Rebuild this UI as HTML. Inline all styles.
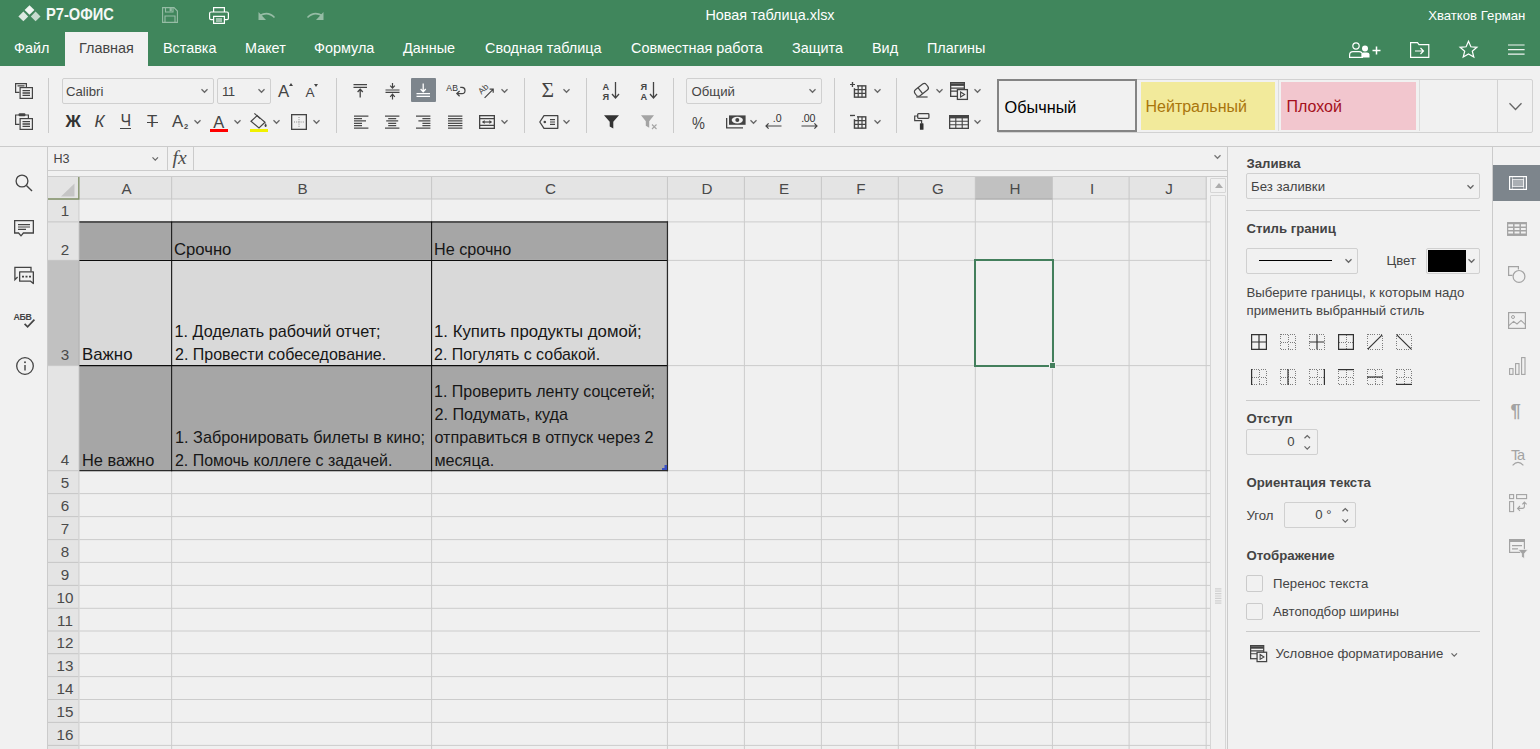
<!DOCTYPE html>
<html lang="ru"><head><meta charset="utf-8"><title>Новая таблица.xlsx</title>
<style>
*{box-sizing:border-box;margin:0;padding:0}
html,body{width:1540px;height:749px;overflow:hidden;background:#f1f1f1;}
body{position:relative;font-family:"Liberation Sans",Arial,Helvetica,sans-serif;font-size:13.2px;color:#444444;line-height:1;}
.a{position:absolute;white-space:nowrap}
svg{position:absolute;overflow:visible}
.tab{position:absolute;top:32px;height:34px;line-height:32px;font-size:14.4px;color:#fff;white-space:nowrap}
.sep{position:absolute;width:1px;background:#cbcbcb;top:78px;height:55px}
.combo{position:absolute;border:1px solid #d0d0d0;border-radius:2px;background:#f1f1f1}
.hl{position:absolute;height:1px;background:#cbcbcb}
.vl{position:absolute;width:1px;background:#cbcbcb}
.ch{position:absolute;top:177px;height:22px;background:#e4e4e4;border-right:1px solid #c3c3c3;border-bottom:1px solid #c3c3c3;text-align:center;font-size:16px;line-height:22px;color:#444}
.rh{position:absolute;left:48px;width:31px;background:#e4e4e4;border-right:1px solid #c3c3c3;border-bottom:1px solid #c3c3c3;text-align:center;font-size:16px;color:#444}
.rh span{position:absolute;left:0;right:0;bottom:1px;line-height:20px}
.ct{position:absolute;font-size:16.2px;line-height:23px;color:#161616;white-space:nowrap}
.lbl{position:absolute;white-space:nowrap;font-size:13.2px;line-height:16px;color:#444444}
.b{font-weight:700}
</style></head>
<body>
<div class="a" style="left:0;top:0;width:1540px;height:66px;background:#40865c"></div>
<svg style="left:18px;top:5px" width="23" height="17" viewBox="0 0 23 17" ><path d="M11.5 0.2 L16.4 5 L11.5 9.8 L6.6 5 Z" fill="#fff" opacity=".93"/><path d="M5.4 6.6 L10.2 11.4 L5.4 16.3 L0.4 11.4 Z" fill="#fff" opacity=".82"/><path d="M17.6 6.6 L22.5 11.4 L17.6 16.3 L12.8 11.4 Z" fill="#fff" opacity=".7"/></svg>
<div class="a b" style="left:45.6px;top:4.8px;font-size:17px;line-height:19px;color:#fff;transform:scaleX(0.862);transform-origin:0 0;opacity:.95">Р7-ОФИС</div>
<svg style="left:162px;top:7px" width="16" height="16" viewBox="0 0 16 16" ><g fill="none" stroke="#fff" stroke-width="1.1" opacity=".45"><path d="M0.6 0.6 H12 L15.4 4 V15.4 H0.6 Z"/><path d="M3.5 0.8 V5 H11 V0.8"/><path d="M3 15 V9 H13 V15"/></g><rect x="7.6" y="1.2" width="2.2" height="3" fill="#fff" opacity=".45"/></svg>
<svg style="left:209px;top:7px" width="20" height="17" viewBox="0 0 20 17" ><g fill="none" stroke="#fff" stroke-width="1.2"><path d="M4.6 5 V0.6 H15.4 V5"/><path d="M4.4 12.6 H2 Q0.6 12.6 0.6 11.2 V6.4 Q0.6 5 2 5 H18 Q19.4 5 19.4 6.4 V11.2 Q19.4 12.6 18 12.6 H15.6"/><path d="M4.6 9.4 H15.4 V16.4 H4.6 Z"/><path d="M7 12 H13 M7 14 H13"/></g></svg>
<svg style="left:258.3px;top:11px" width="18" height="11" viewBox="0 0 18 11" ><g opacity=".45"><path d="M2 4.5 Q10 0 16.5 6.5" fill="none" stroke="#fff" stroke-width="1.6"/><path d="M0.5 1 V9 H8 Z" fill="#fff"/></g></svg>
<svg style="left:306.3px;top:11px" width="18" height="11" viewBox="0 0 18 11" ><g opacity=".45"><path d="M16 4.5 Q8 0 1.5 6.5" fill="none" stroke="#fff" stroke-width="1.6"/><path d="M17.5 1 V9 H10 Z" fill="#fff"/></g></svg>
<div class="a" style="left:0;width:1540px;top:7px;text-align:center;font-size:14.4px;line-height:17px;color:#fff">Новая таблица.xlsx</div>
<div class="a" style="right:14.6px;top:8px;font-size:13.2px;line-height:16px;color:#fff">Хватков Герман</div>
<div class="a" style="left:65px;top:32px;width:83px;height:35px;background:#f1f1f1"></div>
<div class="tab" style="left:14px;color:#fff">Файл</div>
<div class="tab" style="left:79px;color:#444">Главная</div>
<div class="tab" style="left:163px;color:#fff">Вставка</div>
<div class="tab" style="left:245px;color:#fff">Макет</div>
<div class="tab" style="left:314px;color:#fff">Формула</div>
<div class="tab" style="left:403px;color:#fff">Данные</div>
<div class="tab" style="left:485px;color:#fff">Сводная таблица</div>
<div class="tab" style="left:631px;color:#fff">Совместная работа</div>
<div class="tab" style="left:792px;color:#fff">Защита</div>
<div class="tab" style="left:872px;color:#fff">Вид</div>
<div class="tab" style="left:927px;color:#fff">Плагины</div>
<svg style="left:1349px;top:42px" width="33" height="16" viewBox="0 0 33 16" ><g fill="none" stroke="#fff" stroke-width="1.2"><circle cx="7" cy="4" r="3.2"/><path d="M0.6 15.4 V13 Q0.6 9.6 4 9.6 H10 Q13.4 9.6 13.4 13 V15.4 Z"/></g><circle cx="16" cy="6.5" r="3" fill="#fff"/><path d="M12.5 15.6 V12.6 Q12.5 10.6 14.5 10.6 H18 Q20.5 10.6 20.5 12.6 V15.6 Z" fill="#fff"/><path d="M23.5 8.5 H31.5 M27.5 4.5 V12.5" stroke="#fff" stroke-width="1.5"/></svg>
<svg style="left:1410px;top:42px" width="19.4" height="16" viewBox="0 0 19.4 16" ><g fill="none" stroke="#fff" stroke-width="1.2"><path d="M0.6 15.4 V0.6 H7.5 L9 2.6 H18.8 V15.4 Z"/><path d="M5 9 H13.5 M10.5 6 L13.5 9 L10.5 12"/></g></svg>
<svg style="left:1459px;top:40px" width="19" height="18" viewBox="0 0 19 18" ><path d="M9.5 1.2 L11.9 6.8 L17.9 7.3 L13.3 11.2 L14.8 17.1 L9.5 13.9 L4.2 17.1 L5.7 11.2 L1.1 7.3 L7.1 6.8 Z" fill="none" stroke="#fff" stroke-width="1.2" stroke-linejoin="miter"/></svg>
<svg style="left:1507.6px;top:44.4px" width="17" height="11" viewBox="0 0 17 11" ><path d="M0 1 H16.6 M0 5.6 H16.6 M0 10.2 H16.6" stroke="#fff" stroke-width="1.2" opacity=".92"/></svg>
<div class="hl" style="left:0;top:146px;width:1540px"></div>
<div class="sep" style="left:48px"></div>
<div class="sep" style="left:336px"></div>
<div class="sep" style="left:524px"></div>
<div class="sep" style="left:586px"></div>
<div class="sep" style="left:673px"></div>
<div class="sep" style="left:834px"></div>
<div class="sep" style="left:896px"></div>
<svg style="left:15px;top:83px" width="18" height="16" viewBox="0 0 18 16" ><g fill="none" stroke="#444444" stroke-width="1.2"><path d="M11.4 4 V0.6 H0.6 V9.4 H4.5"/><rect x="5.1" y="4.6" width="12.3" height="10.8"/></g><path d="M2.5 2.8 H9.5 M7.5 7.6 H15 M7.5 10 H15 M7.5 12.4 H15" stroke="#444444" stroke-width="1.3"/></svg>
<svg style="left:15px;top:113px" width="18" height="17" viewBox="0 0 18 17" ><g fill="none" stroke="#444444" stroke-width="1.2"><path d="M4.5 11.4 H0.6 V2 H13.4 V5"/><rect x="5.1" y="5.6" width="12.3" height="10.8"/></g><rect x="3.6" y="0.2" width="6.8" height="3" rx="1" fill="#444444"/><path d="M7.5 8.6 H15 M7.5 11 H15 M7.5 13.4 H15" stroke="#444444" stroke-width="1.3"/></svg>
<div class="combo" style="left:62px;top:78px;width:152px;height:26px"></div>
<div class="lbl" style="left:66px;top:83.6px">Calibri</div>
<svg style="left:201.0px;top:89.1px" width="7" height="3.8" viewBox="0 0 7 3.8"><path d="M0.5 0.3 L3.5 3.3 L6.5 0.3" fill="none" stroke="#666" stroke-width="1.25"/></svg>
<div class="combo" style="left:217px;top:78px;width:54px;height:26px"></div>
<div class="lbl" style="left:222px;top:83.6px;letter-spacing:-0.6px">11</div>
<svg style="left:257.5px;top:89.1px" width="7" height="3.8" viewBox="0 0 7 3.8"><path d="M0.5 0.3 L3.5 3.3 L6.5 0.3" fill="none" stroke="#666" stroke-width="1.25"/></svg>
<div class="a" style="left:278px;top:81.5px;font-size:16.8px;line-height:20px;color:#444">A</div>
<svg style="left:288.5px;top:82.5px" width="4" height="3" viewBox="0 0 4 3" ><path d="M0 3 L2 0 L4 3 Z" fill="#444444"/></svg>
<div class="a" style="left:305.5px;top:84.4px;font-size:13.6px;line-height:17px;color:#444">A</div>
<svg style="left:314px;top:84.3px" width="4" height="3" viewBox="0 0 4 3" ><path d="M0 0 L2 3 L4 0 Z" fill="#444444"/></svg>
<div class="a b" style="left:65.5px;top:112px;font-size:17px;line-height:20px;color:#333">Ж</div>
<div class="a" style="left:94.5px;top:112px;font-size:17px;line-height:20px;font-style:italic;color:#444">К</div>
<div class="a" style="left:120.5px;top:111px;font-size:16px;line-height:20px;color:#444">Ч</div>
<div class="a" style="left:120px;top:128px;width:11px;height:1.3px;background:#444444"></div>
<div class="a" style="left:147px;top:112.2px;font-size:16.8px;line-height:20px;color:#444">Т</div>
<div class="a" style="left:146.5px;top:121.6px;width:11.5px;height:1.3px;background:#444444"></div>
<div class="a" style="left:172px;top:112.2px;font-size:16.8px;line-height:20px;color:#444">A</div>
<div class="a b" style="left:184px;top:122.5px;font-size:7.5px;line-height:8px;color:#444">2</div>
<svg style="left:194.0px;top:120.1px" width="7" height="3.8" viewBox="0 0 7 3.8"><path d="M0.5 0.3 L3.5 3.3 L6.5 0.3" fill="none" stroke="#666" stroke-width="1.25"/></svg>
<div class="a" style="left:213.3px;top:112.4px;font-size:16.5px;line-height:20px;color:#444">A</div>
<div class="a" style="left:210px;top:129px;width:17.5px;height:3.4px;background:#f00"></div>
<svg style="left:233.5px;top:120.1px" width="7" height="3.8" viewBox="0 0 7 3.8"><path d="M0.5 0.3 L3.5 3.3 L6.5 0.3" fill="none" stroke="#666" stroke-width="1.25"/></svg>
<svg style="left:250px;top:113px" width="17" height="16" viewBox="0 0 17 16" ><g fill="none" stroke="#444444" stroke-width="1.2"><path d="M7.2 2.6 L15 9.2 L9 15 L1 8.2 Z"/><path d="M4.4 0.4 L10.2 5.6"/></g><path d="M15.6 10.6 Q17.2 13.2 15.6 14 Q14 13.2 15.6 10.6 Z" fill="#444444" stroke="#444444" stroke-width="0.6"/></svg>
<div class="a" style="left:250px;top:129px;width:17.5px;height:3.4px;background:#f1f100"></div>
<svg style="left:273.0px;top:120.1px" width="7" height="3.8" viewBox="0 0 7 3.8"><path d="M0.5 0.3 L3.5 3.3 L6.5 0.3" fill="none" stroke="#666" stroke-width="1.25"/></svg>
<svg style="left:291px;top:114px" width="16" height="16" viewBox="0 0 16 16" ><rect x="0.65" y="0.65" width="14.7" height="14.7" fill="none" stroke="#444444" stroke-width="1.3"/><path d="M8 3 V13 M3 8 H13" stroke="#888" stroke-width="1" stroke-dasharray="1 1.2"/></svg>
<svg style="left:313.0px;top:120.1px" width="7" height="3.8" viewBox="0 0 7 3.8"><path d="M0.5 0.3 L3.5 3.3 L6.5 0.3" fill="none" stroke="#666" stroke-width="1.25"/></svg>
<svg style="left:353px;top:84px" width="15" height="14" viewBox="0 0 15 14" ><path d="M0.5 0.7 H14 M0.5 3.3 H14" stroke="#444444" stroke-width="1.3"/><path d="M7.2 13.5 V5.5 M4.6 8 L7.2 5.3 L9.8 8" fill="none" stroke="#444444" stroke-width="1.3"/></svg>
<svg style="left:384.5px;top:83px" width="15" height="16" viewBox="0 0 15 16" ><path d="M0.5 7 H14.5 M0.5 9.4 H14.5" stroke="#444444" stroke-width="1.2"/><path d="M7.5 0 V5 M5.2 2.6 L7.5 5.2 L9.8 2.6 M7.5 16.4 V11.4 M5.2 13.8 L7.5 11.2 L9.8 13.8" fill="none" stroke="#444444" stroke-width="1.2"/></svg>
<div class="a" style="left:411px;top:78px;width:25px;height:24px;background:#7d858c;border-radius:1px"></div>
<svg style="left:416px;top:83px" width="15" height="14" viewBox="0 0 15 14" ><path d="M0.5 10.7 H14 M0.5 13.3 H14" stroke="#fff" stroke-width="1.3"/><path d="M7.2 0.5 V8.5 M4.6 6 L7.2 8.7 L9.8 6" fill="none" stroke="#fff" stroke-width="1.3"/></svg>
<div class="a" style="left:446.3px;top:83.6px;font-size:8.6px;line-height:8px;color:#333;letter-spacing:0.3px">AB</div>
<svg style="left:446.5px;top:84px" width="19" height="15" viewBox="0 0 19 15" ><path d="M13.2 3.4 H15 Q18 3.6 18 6.4 Q18 9.6 15 9.6 H10 M12.6 7 L9.8 9.6 L12.6 12.2" fill="none" stroke="#444444" stroke-width="1.2"/></svg>
<svg style="left:479.5px;top:83px" width="16" height="16" viewBox="0 0 16 16" ><text x="1.6" y="11.8" font-size="8.6" fill="#444444" font-family="Liberation Sans, Arial, sans-serif" transform="rotate(-45 1.6 11.8)">Ab</text><path d="M4.6 14.8 L12.8 6.6 M9.6 6.2 L13.2 6.2 L13.2 9.8" fill="none" stroke="#444444" stroke-width="1.2"/></svg>
<svg style="left:501.0px;top:89.1px" width="7" height="3.8" viewBox="0 0 7 3.8"><path d="M0.5 0.3 L3.5 3.3 L6.5 0.3" fill="none" stroke="#666" stroke-width="1.25"/></svg>
<svg style="left:353.7px;top:115px" width="15" height="14" viewBox="0 0 15 14" ><path d="M0.0 1.1 H14.4 M0.0 3.5 H8.0 M0.0 5.9 H12.0 M0.0 8.4 H8.0 M0.0 10.7 H8.0 M0.0 13.1 H14.4" stroke="#4a4a4a" stroke-width="1.25"/></svg>
<svg style="left:385px;top:115px" width="15" height="14" viewBox="0 0 15 14" ><path d="M0.0 1.1 H14.4 M3.2 3.5 H11.2 M1.2 5.9 H13.2 M3.2 8.4 H11.2 M3.2 10.7 H11.2 M0.0 13.1 H14.4" stroke="#4a4a4a" stroke-width="1.25"/></svg>
<svg style="left:416.3px;top:115px" width="15" height="14" viewBox="0 0 15 14" ><path d="M0.0 1.1 H14.4 M6.4 3.5 H14.4 M2.4 5.9 H14.4 M6.4 8.4 H14.4 M6.4 10.7 H14.4 M0.0 13.1 H14.4" stroke="#4a4a4a" stroke-width="1.25"/></svg>
<svg style="left:447.5px;top:115px" width="15" height="14" viewBox="0 0 15 14" ><path d="M0.0 1.1 H14.4 M0.0 3.5 H14.4 M0.0 5.9 H14.4 M0.0 8.4 H14.4 M0.0 10.7 H14.4 M0.0 13.1 H14.4" stroke="#4a4a4a" stroke-width="1.25"/></svg>
<svg style="left:479px;top:115px" width="16" height="14" viewBox="0 0 16 14" ><rect x="0.65" y="0.65" width="14.7" height="12.7" fill="none" stroke="#444444" stroke-width="1.3"/><path d="M0.5 3.6 H15.5 M0.5 10.4 H15.5" stroke="#444444" stroke-width="1.1"/><path d="M3.5 7 H12.5" stroke="#444444" stroke-width="1.2"/><path d="M5.6 5 L3.2 7 L5.6 9 Z M10.4 5 L12.8 7 L10.4 9 Z" fill="#444444"/></svg>
<svg style="left:501.0px;top:120.1px" width="7" height="3.8" viewBox="0 0 7 3.8"><path d="M0.5 0.3 L3.5 3.3 L6.5 0.3" fill="none" stroke="#666" stroke-width="1.25"/></svg>
<div class="a" style="left:541.5px;top:79px;font-family:'Liberation Serif',serif;font-size:21.5px;line-height:22px;color:#444">Σ</div>
<svg style="left:563.0px;top:89.1px" width="7" height="3.8" viewBox="0 0 7 3.8"><path d="M0.5 0.3 L3.5 3.3 L6.5 0.3" fill="none" stroke="#666" stroke-width="1.25"/></svg>
<svg style="left:539px;top:115px" width="19.5" height="14" viewBox="0 0 19.5 14" ><path d="M5 0.65 H18.8 V13.35 H5 L0.8 7 Z" fill="none" stroke="#444444" stroke-width="1.3" stroke-linejoin="round"/><circle cx="5.8" cy="7" r="1.3" fill="#444444"/><path d="M11 4.6 H16 M11 7 H16 M11 9.4 H16" stroke="#444444" stroke-width="1.2"/></svg>
<svg style="left:563.0px;top:120.1px" width="7" height="3.8" viewBox="0 0 7 3.8"><path d="M0.5 0.3 L3.5 3.3 L6.5 0.3" fill="none" stroke="#666" stroke-width="1.25"/></svg>
<div class="a b" style="left:602.6px;top:81.6px;font-size:9.2px;line-height:10.4px;color:#444">A<br>Я</div>
<svg style="left:611px;top:82px" width="9" height="17" viewBox="0 0 9 17" ><path d="M4.5 0 V15.5 M1 12 L4.5 16 L8 12" fill="none" stroke="#444444" stroke-width="1.3"/></svg>
<div class="a b" style="left:640.6px;top:81.6px;font-size:9.2px;line-height:10.4px;color:#444">Я<br>A</div>
<svg style="left:649px;top:82px" width="9" height="17" viewBox="0 0 9 17" ><path d="M4.5 0 V15.5 M1 12 L4.5 16 L8 12" fill="none" stroke="#444444" stroke-width="1.3"/></svg>
<svg style="left:603.5px;top:115px" width="15" height="14" viewBox="0 0 15 14" ><path d="M0 0.3 H15 L9.3 6.8 V13.6 L5.7 11.5 V6.8 Z" fill="#333"/></svg>
<svg style="left:641px;top:115px" width="17" height="15" viewBox="0 0 17 15" ><g opacity=".4"><path d="M0 0.3 H13 L8.2 6.3 V12.8 L4.8 10.8 V6.3 Z" fill="#333"/><path d="M11 9.5 L15.5 14 M15.5 9.5 L11 14" stroke="#333" stroke-width="1.1"/></g></svg>
<div class="combo" style="left:686px;top:78px;width:136px;height:26px"></div>
<div class="lbl" style="left:691.5px;top:83.6px">Общий</div>
<svg style="left:808.5px;top:89.1px" width="7" height="3.8" viewBox="0 0 7 3.8"><path d="M0.5 0.3 L3.5 3.3 L6.5 0.3" fill="none" stroke="#666" stroke-width="1.25"/></svg>
<div class="a" style="left:691.5px;top:113.2px;font-size:16.5px;line-height:20px;color:#444;transform:scaleX(0.88);transform-origin:0 0">%</div>
<svg style="left:725.5px;top:115.3px" width="20" height="14" viewBox="0 0 20 14" ><rect x="3" y="0.4" width="16.6" height="9.4" fill="#444444"/><path d="M0.65 3 V12.9 H17" fill="none" stroke="#444444" stroke-width="1.3"/><ellipse cx="11.3" cy="5.1" rx="5.6" ry="3.3" fill="#f1f1f1"/><circle cx="11.3" cy="5.1" r="2" fill="#444444"/></svg>
<svg style="left:750.0px;top:120.1px" width="7" height="3.8" viewBox="0 0 7 3.8"><path d="M0.5 0.3 L3.5 3.3 L6.5 0.3" fill="none" stroke="#666" stroke-width="1.25"/></svg>
<div class="a" style="left:772.8px;top:112.8px;font-size:10.6px;line-height:10px;color:#333">.0</div>
<svg style="left:765px;top:123px" width="17" height="6" viewBox="0 0 17 6" ><path d="M16.5 3 H1 M3.6 0.4 L1 3 L3.6 5.6" fill="none" stroke="#444444" stroke-width="1.2"/></svg>
<div class="a" style="left:801.2px;top:112.8px;font-size:10.6px;line-height:10px;color:#333;letter-spacing:-0.3px">.00</div>
<svg style="left:801px;top:123px" width="17" height="6" viewBox="0 0 17 6" ><path d="M0.5 3 H16 M13.4 0.4 L16 3 L13.4 5.6" fill="none" stroke="#444444" stroke-width="1.2"/></svg>
<svg style="left:850px;top:82.2px" width="17" height="16" viewBox="0 0 17 16" ><path d="M0 2.5 H5 M2.5 0 V5" stroke="#444444" stroke-width="1.2"/><rect x="4.45" y="3.85" width="11.3" height="11.3" fill="none" stroke="#444444" stroke-width="1.4"/><path d="M4.5 7.6 H15.8 M4.5 11.4 H15.8 M8.2 3.8 V15.2 M12 3.8 V15.2" stroke="#444444" stroke-width="1.2"/><rect x="3" y="2.2" width="4" height="4" fill="#f1f1f1"/><path d="M0 2.5 H5 M2.5 0 V5" stroke="#444444" stroke-width="1.2"/></svg>
<svg style="left:873.5px;top:89.1px" width="7" height="3.8" viewBox="0 0 7 3.8"><path d="M0.5 0.3 L3.5 3.3 L6.5 0.3" fill="none" stroke="#666" stroke-width="1.25"/></svg>
<svg style="left:850px;top:113.4px" width="17" height="16" viewBox="0 0 17 16" ><path d="M0 2.5 H5" stroke="#444444" stroke-width="1.2"/><rect x="4.45" y="3.85" width="11.3" height="11.3" fill="none" stroke="#444444" stroke-width="1.4"/><path d="M4.5 7.6 H15.8 M4.5 11.4 H15.8 M8.2 3.8 V15.2 M12 3.8 V15.2" stroke="#444444" stroke-width="1.2"/><rect x="3" y="2.2" width="4" height="4" fill="#f1f1f1"/><path d="M0 2.5 H5" stroke="#444444" stroke-width="1.2"/></svg>
<svg style="left:873.5px;top:120.1px" width="7" height="3.8" viewBox="0 0 7 3.8"><path d="M0.5 0.3 L3.5 3.3 L6.5 0.3" fill="none" stroke="#666" stroke-width="1.25"/></svg>
<svg style="left:913px;top:83px" width="17" height="15" viewBox="0 0 17 15" ><g transform="rotate(-38 8.2 7)" fill="none" stroke="#444444" stroke-width="1.2"><rect x="1.2" y="3.2" width="14.4" height="7.6" rx="2.6"/><path d="M7 3.2 V10.8"/></g><path d="M3.2 14 H14.6" stroke="#444444" stroke-width="1.2"/></svg>
<svg style="left:936.0px;top:89.1px" width="7" height="3.8" viewBox="0 0 7 3.8"><path d="M0.5 0.3 L3.5 3.3 L6.5 0.3" fill="none" stroke="#666" stroke-width="1.25"/></svg>
<svg style="left:950px;top:82px" width="18" height="18" viewBox="0 0 18 18" ><rect x="0.65" y="0.65" width="13.7" height="13.7" fill="none" stroke="#444444" stroke-width="1.3"/><path d="M0.6 2.6 H14.4" stroke="#444444" stroke-width="2.6"/><path d="M0.5 6.2 H14.5 M0.5 9.2 H14.5" stroke="#444444" stroke-width="1.2"/><rect x="7.4" y="7.6" width="10" height="9.8" fill="#f1f1f1" stroke="#444444" stroke-width="1.3"/><path d="M10.6 10 L14.6 12.5 L10.6 15 Z" fill="none" stroke="#444444" stroke-width="1.1"/></svg>
<svg style="left:973.5px;top:89.1px" width="7" height="3.8" viewBox="0 0 7 3.8"><path d="M0.5 0.3 L3.5 3.3 L6.5 0.3" fill="none" stroke="#666" stroke-width="1.25"/></svg>
<svg style="left:914px;top:113px" width="16" height="17" viewBox="0 0 16 17" ><rect x="3.7" y="0.7" width="11.2" height="4.6" rx="0.8" fill="none" stroke="#444444" stroke-width="1.3"/><path d="M3.6 3 H0.7 V7.6 H7.6 V10.5" fill="none" stroke="#444444" stroke-width="1.2"/><rect x="5.9" y="10.2" width="3.6" height="6.6" rx="0.6" fill="#333"/></svg>
<svg style="left:949px;top:115px" width="20" height="14" viewBox="0 0 20 14" ><rect x="0.65" y="0.65" width="18.7" height="12.7" fill="none" stroke="#444444" stroke-width="1.3"/><path d="M0.6 2.2 H19.4" stroke="#444444" stroke-width="2.4"/><path d="M0.5 6.2 H19.5 M0.5 9.8 H19.5 M6.8 1 V13.4 M13.2 1 V13.4" stroke="#444444" stroke-width="1.1"/></svg>
<svg style="left:973.5px;top:120.1px" width="7" height="3.8" viewBox="0 0 7 3.8"><path d="M0.5 0.3 L3.5 3.3 L6.5 0.3" fill="none" stroke="#666" stroke-width="1.25"/></svg>
<div class="a" style="left:997px;top:79px;width:536px;height:54px;border:1px solid #d2d2d2;border-radius:2px"></div>
<div class="a" style="left:997px;top:79px;width:140px;height:53px;border:2px solid #848484;background:#f1f1f1"></div>
<div class="a" style="left:1141px;top:82px;width:134px;height:48px;background:#f2ea9b"></div>
<div class="a" style="left:1281px;top:82px;width:135px;height:48px;background:#f2c6ce"></div>
<div class="vl" style="left:1278px;top:80px;height:51px;background:#dcdcdc"></div>
<div class="vl" style="left:1419px;top:80px;height:51px;background:#dcdcdc"></div>
<div class="vl" style="left:1497px;top:80px;height:52px;background:#d2d2d2"></div>
<div class="a" style="left:1004.5px;top:97.5px;font-size:16.3px;line-height:18px;color:#000">Обычный</div>
<div class="a" style="left:1145.5px;top:97.5px;font-size:16px;line-height:18px;color:#a9750c">Нейтральный</div>
<div class="a" style="left:1286.5px;top:97.5px;font-size:16px;line-height:18px;color:#a5101c">Плохой</div>
<svg style="left:1508.5px;top:102.5px" width="13" height="7" viewBox="0 0 13 7"><path d="M0.5 0.3 L6.5 6.5 L12.5 0.3" fill="none" stroke="#666" stroke-width="1.3"/></svg>
<div class="vl" style="left:47px;top:147px;height:602px"></div>
<svg style="left:15px;top:174px" width="18" height="18" viewBox="0 0 18 18" ><circle cx="7" cy="7" r="5.9" fill="none" stroke="#444444" stroke-width="1.3"/><path d="M11.4 11.4 L17 17" stroke="#444444" stroke-width="1.4"/></svg>
<svg style="left:14px;top:220px" width="20" height="17" viewBox="0 0 20 17" ><path d="M0.65 0.65 H19.35 V13 H9.4 L7 15.8 L4.6 13 H0.65 Z" fill="none" stroke="#444444" stroke-width="1.3"/><path d="M4 4.6 H16 M4 7 H16 M4 9.4 H12" stroke="#444444" stroke-width="1.1"/></svg>
<svg style="left:14px;top:266px" width="20" height="18" viewBox="0 0 20 18" ><path d="M17 5.4 V1.4 H0.9 V13.6 L3.6 11" fill="none" stroke="#444444" stroke-width="1.3"/><path d="M5.65 5.85 H19.35 V17.6 L16.6 15.2 H5.65 Z" fill="none" stroke="#444444" stroke-width="1.3" stroke-linejoin="round"/><path d="M8 10.6 H10 M11.5 10.6 H13.5 M15 10.6 H17" stroke="#444444" stroke-width="1.7"/></svg>
<div class="a b" style="left:13.6px;top:312px;font-size:8.8px;line-height:10px;color:#444;letter-spacing:-0.4px">АБВ</div>
<svg style="left:23.5px;top:318.5px" width="11" height="9" viewBox="0 0 11 9" ><path d="M0.6 4.8 L3.6 7.8 L10.4 0.6" fill="none" stroke="#444444" stroke-width="1.7"/></svg>
<svg style="left:15.6px;top:357.2px" width="18" height="18" viewBox="0 0 18 18" ><circle cx="9" cy="9" r="8.3" fill="none" stroke="#444444" stroke-width="1.3"/><path d="M9 8 V13.4" stroke="#444444" stroke-width="1.4"/><circle cx="9" cy="5.2" r="0.95" fill="#444444"/></svg>
<div class="hl" style="left:48px;top:170px;width:1180px"></div>
<div class="hl" style="left:48px;top:176px;width:1180px"></div>
<div class="vl" style="left:167px;top:147px;height:23px"></div>
<div class="vl" style="left:193px;top:147px;height:23px"></div>
<div class="vl" style="left:1227px;top:147px;height:602px"></div>
<div class="a" style="left:53.5px;top:152px;font-size:12.6px;line-height:14px;color:#444">H3</div>
<svg style="left:151.75px;top:156.7px" width="6.5" height="3.6" viewBox="0 0 6.5 3.6"><path d="M0.5 0.3 L3.25 3.1 L6.0 0.3" fill="none" stroke="#666" stroke-width="1.2"/></svg>
<div class="a" style="left:172.5px;top:147.6px;font-family:'Liberation Serif',serif;font-style:italic;font-size:19.5px;line-height:20px;color:#4c4c4c;letter-spacing:0.2px">fx</div>
<svg style="left:1213.8px;top:154.9px" width="7" height="3.8" viewBox="0 0 7 3.8"><path d="M0.5 0.3 L3.5 3.3 L6.5 0.3" fill="none" stroke="#777" stroke-width="1.3"/></svg>
<div class="a" style="left:79px;top:200px;width:1128px;height:549px;background:#f0f0f0"></div>
<div class="a" style="left:48px;top:177px;width:1159px;height:22px;background:#e4e4e4"></div>
<div class="a" style="left:48px;top:177px;width:30px;height:572px;background:#e4e4e4"></div>
<div class="a" style="left:975px;top:177px;width:77px;height:22px;background:#c1c1c1"></div>
<div class="a" style="left:48px;top:260px;width:30px;height:105px;background:#c1c1c1"></div>
<div class="a" style="left:79px;top:221px;width:588px;height:39px;background:#a6a6a6"></div>
<div class="a" style="left:79px;top:260px;width:588px;height:105px;background:#d9d9d9"></div>
<div class="a" style="left:79px;top:365px;width:588px;height:105px;background:#a6a6a6"></div>
<svg style="left:0;top:0" width="1540" height="749" viewBox="0 0 1540 749" fill="none" stroke-width="1"><path d="M78.9 177 V199.5" stroke="#c6c6c6"/><path d="M171.65 177 V199.5" stroke="#c6c6c6"/><path d="M171.65 199.5 V749" stroke="#cccccc"/><path d="M431.6 177 V199.5" stroke="#c6c6c6"/><path d="M431.6 199.5 V749" stroke="#cccccc"/><path d="M667.45 177 V199.5" stroke="#c6c6c6"/><path d="M667.45 199.5 V749" stroke="#cccccc"/><path d="M744.4 177 V199.5" stroke="#c6c6c6"/><path d="M744.4 199.5 V749" stroke="#cccccc"/><path d="M821.4 177 V199.5" stroke="#c6c6c6"/><path d="M821.4 199.5 V749" stroke="#cccccc"/><path d="M898.3 177 V199.5" stroke="#c6c6c6"/><path d="M898.3 199.5 V749" stroke="#cccccc"/><path d="M975.3 177 V199.5" stroke="#c6c6c6"/><path d="M975.3 199.5 V749" stroke="#cccccc"/><path d="M1052.45 177 V199.5" stroke="#c6c6c6"/><path d="M1052.45 199.5 V749" stroke="#cccccc"/><path d="M1129.1 177 V199.5" stroke="#c6c6c6"/><path d="M1129.1 199.5 V749" stroke="#cccccc"/><path d="M1206.2 177 V199.5" stroke="#c6c6c6"/><path d="M1206.2 199.5 V749" stroke="#cccccc"/><path d="M78.9 199.5 V749" stroke="#c6c6c6"/><path d="M78.9 260.4 V365.6" stroke="#a6a6a6"/><path d="M48 221.9 H78.4" stroke="#c6c6c6"/><path d="M79.4 221.9 H1210.5" stroke="#cccccc"/><path d="M48 260.4 H78.4" stroke="#c6c6c6"/><path d="M79.4 260.4 H1210.5" stroke="#cccccc"/><path d="M48 365.6 H78.4" stroke="#c6c6c6"/><path d="M79.4 365.6 H1210.5" stroke="#cccccc"/><path d="M48 470.7 H78.4" stroke="#c6c6c6"/><path d="M79.4 470.7 H1210.5" stroke="#cccccc"/><path d="M48 493.6 H78.4" stroke="#c6c6c6"/><path d="M79.4 493.6 H1210.5" stroke="#cccccc"/><path d="M48 516.6 H78.4" stroke="#c6c6c6"/><path d="M79.4 516.6 H1210.5" stroke="#cccccc"/><path d="M48 539.6 H78.4" stroke="#c6c6c6"/><path d="M79.4 539.6 H1210.5" stroke="#cccccc"/><path d="M48 562.4 H78.4" stroke="#c6c6c6"/><path d="M79.4 562.4 H1210.5" stroke="#cccccc"/><path d="M48 585.4 H78.4" stroke="#c6c6c6"/><path d="M79.4 585.4 H1210.5" stroke="#cccccc"/><path d="M48 608.3 H78.4" stroke="#c6c6c6"/><path d="M79.4 608.3 H1210.5" stroke="#cccccc"/><path d="M48 631.0 H78.4" stroke="#c6c6c6"/><path d="M79.4 631.0 H1210.5" stroke="#cccccc"/><path d="M48 653.7 H78.4" stroke="#c6c6c6"/><path d="M79.4 653.7 H1210.5" stroke="#cccccc"/><path d="M48 676.6 H78.4" stroke="#c6c6c6"/><path d="M79.4 676.6 H1210.5" stroke="#cccccc"/><path d="M48 699.5 H78.4" stroke="#c6c6c6"/><path d="M79.4 699.5 H1210.5" stroke="#cccccc"/><path d="M48 722.4 H78.4" stroke="#c6c6c6"/><path d="M79.4 722.4 H1210.5" stroke="#cccccc"/><path d="M48 745.4 H78.4" stroke="#c6c6c6"/><path d="M79.4 745.4 H1210.5" stroke="#cccccc"/><path d="M48 199.0 H1206.6" stroke="#c6c6c6"/><path d="M975.3 199.0 H1052.45" stroke="#a6a6a6"/></svg>
<div class="a" style="left:80.5px;top:179.6px;width:92px;text-align:center;font-size:15.2px;line-height:18px;color:#4a4a4a">A</div>
<div class="a" style="left:172.5px;top:179.6px;width:260px;text-align:center;font-size:15.2px;line-height:18px;color:#4a4a4a">B</div>
<div class="a" style="left:432.5px;top:179.6px;width:236px;text-align:center;font-size:15.2px;line-height:18px;color:#4a4a4a">C</div>
<div class="a" style="left:668.5px;top:179.6px;width:77px;text-align:center;font-size:15.2px;line-height:18px;color:#4a4a4a">D</div>
<div class="a" style="left:745.5px;top:179.6px;width:77px;text-align:center;font-size:15.2px;line-height:18px;color:#4a4a4a">E</div>
<div class="a" style="left:822.5px;top:179.6px;width:77px;text-align:center;font-size:15.2px;line-height:18px;color:#4a4a4a">F</div>
<div class="a" style="left:899.5px;top:179.6px;width:77px;text-align:center;font-size:15.2px;line-height:18px;color:#4a4a4a">G</div>
<div class="a" style="left:976.5px;top:179.6px;width:77px;text-align:center;font-size:15.2px;line-height:18px;color:#4a4a4a">H</div>
<div class="a" style="left:1053.5px;top:179.6px;width:77px;text-align:center;font-size:15.2px;line-height:18px;color:#4a4a4a">I</div>
<div class="a" style="left:1130.5px;top:179.6px;width:77px;text-align:center;font-size:15.2px;line-height:18px;color:#4a4a4a">J</div>
<div class="a" style="left:49.5px;top:202px;width:31px;text-align:center;font-size:15.2px;line-height:18px;color:#4a4a4a">1</div>
<div class="a" style="left:49.5px;top:241px;width:31px;text-align:center;font-size:15.2px;line-height:18px;color:#4a4a4a">2</div>
<div class="a" style="left:49.5px;top:346px;width:31px;text-align:center;font-size:15.2px;line-height:18px;color:#4a4a4a">3</div>
<div class="a" style="left:49.5px;top:451px;width:31px;text-align:center;font-size:15.2px;line-height:18px;color:#4a4a4a">4</div>
<div class="a" style="left:49.5px;top:474px;width:31px;text-align:center;font-size:15.2px;line-height:18px;color:#4a4a4a">5</div>
<div class="a" style="left:49.5px;top:497px;width:31px;text-align:center;font-size:15.2px;line-height:18px;color:#4a4a4a">6</div>
<div class="a" style="left:49.5px;top:520px;width:31px;text-align:center;font-size:15.2px;line-height:18px;color:#4a4a4a">7</div>
<div class="a" style="left:49.5px;top:543px;width:31px;text-align:center;font-size:15.2px;line-height:18px;color:#4a4a4a">8</div>
<div class="a" style="left:49.5px;top:566px;width:31px;text-align:center;font-size:15.2px;line-height:18px;color:#4a4a4a">9</div>
<div class="a" style="left:49.5px;top:589px;width:31px;text-align:center;font-size:15.2px;line-height:18px;color:#4a4a4a">10</div>
<div class="a" style="left:49.5px;top:612px;width:31px;text-align:center;font-size:15.2px;line-height:18px;color:#4a4a4a">11</div>
<div class="a" style="left:49.5px;top:634px;width:31px;text-align:center;font-size:15.2px;line-height:18px;color:#4a4a4a">12</div>
<div class="a" style="left:49.5px;top:657px;width:31px;text-align:center;font-size:15.2px;line-height:18px;color:#4a4a4a">13</div>
<div class="a" style="left:49.5px;top:680px;width:31px;text-align:center;font-size:15.2px;line-height:18px;color:#4a4a4a">14</div>
<div class="a" style="left:49.5px;top:703px;width:31px;text-align:center;font-size:15.2px;line-height:18px;color:#4a4a4a">15</div>
<div class="a" style="left:49.5px;top:726px;width:31px;text-align:center;font-size:15.2px;line-height:18px;color:#4a4a4a">16</div>
<svg style="left:60px;top:183px" width="15" height="14" viewBox="0 0 15 14" ><path d="M14.5 0.5 V13.5 H1 Z" fill="#c5c5c5"/></svg>
<svg style="left:0;top:0" width="100" height="210" viewBox="0 0 100 210" fill="none"><path d="M48 199 H78.8 V177" stroke="#83936a" stroke-width="1.3"/></svg>
<svg style="left:0;top:0" width="1540" height="749" viewBox="0 0 1540 749" fill="none"><path d="M79.4 222.1 H668" stroke="#333" stroke-width="1.5"/><path d="M79.4 260.4 H668" stroke="#0c0c0c" stroke-width="1.05"/><path d="M79.4 365.6 H668" stroke="#0c0c0c" stroke-width="1.05"/><path d="M79.4 470.59999999999997 H668" stroke="#2a2a2a" stroke-width="1.25"/><path d="M171.65 221.4 V471.2" stroke="#0c0c0c" stroke-width="1.05"/><path d="M431.6 221.4 V471.2" stroke="#0c0c0c" stroke-width="1.05"/><path d="M667.45 221.4 V471.2" stroke="#2a2a2a" stroke-width="1.25"/></svg>
<div class="ct" style="left:174px;top:238px"><span style="display:block;transform:scaleX(1.03);transform-origin:0 50%">Срочно</span></div>
<div class="ct" style="left:434px;top:238px"><span style="display:block">Не срочно</span></div>
<div class="ct" style="left:81.5px;top:343px"><span style="display:block;transform:scaleX(1.04);transform-origin:0 50%">Важно</span></div>
<div class="ct" style="left:174.6px;top:320px"><span style="display:block">1. Доделать рабочий отчет;</span><span style="display:block;transform:scaleX(0.989);transform-origin:0 50%">2. Провести собеседование.</span></div>
<div class="ct" style="left:434.4px;top:320px"><span style="display:block;transform:scaleX(1.036);transform-origin:0 50%">1. Купить продукты домой;</span><span style="display:block;transform:scaleX(0.987);transform-origin:0 50%">2. Погулять с собакой.</span></div>
<div class="ct" style="left:81.5px;top:448.7px"><span style="display:block;transform:scaleX(1.012);transform-origin:0 50%">Не важно</span></div>
<div class="ct" style="left:174.6px;top:425.7px"><span style="display:block;transform:scaleX(1.005);transform-origin:0 50%">1. Забронировать билеты в кино;</span><span style="display:block;transform:scaleX(0.985);transform-origin:0 50%">2. Помочь коллеге с задачей.</span></div>
<div class="ct" style="left:434.4px;top:379.7px"><span style="display:block;transform:scaleX(0.988);transform-origin:0 50%">1. Проверить ленту соцсетей;</span><span style="display:block">2. Подумать, куда</span><span style="display:block">отправиться в отпуск через 2</span><span style="display:block">месяца.</span></div>
<svg style="left:662.2px;top:465.4px" width="5" height="5" viewBox="0 0 5 5" ><path d="M5 0 V5 H0 V3 H2.5 V0 Z" fill="#3a50c4"/></svg>
<div class="a" style="left:974px;top:259px;width:80px;height:108px;border:2px solid #437f5c"></div>
<div class="a" style="left:1049px;top:362px;width:7px;height:7px;background:#437f5c;border:1px solid #f0f0f0"></div>
<div class="a" style="left:1210px;top:178px;width:16px;height:15px;border:1px solid #d6d6d6;background:#f1f1f1;border-radius:1px"></div>
<svg style="left:1214.5px;top:183px" width="8" height="5" viewBox="0 0 8 5" ><path d="M0 5 L4 0 L8 5 Z" fill="#adadad"/></svg>
<div class="a" style="left:1210px;top:195px;width:16px;height:560px;border:1px solid #d6d6d6;background:#f1f1f1;border-radius:1px"></div>
<svg style="left:1215px;top:587.5px" width="6.5" height="16" viewBox="0 0 6.5 16" ><path d="M0 0.8 H6.4 M0 3.2 H6.4 M0 5.6 H6.4 M0 8 H6.4 M0 10.4 H6.4 M0 12.8 H6.4 M0 15.2 H6.4" stroke="#d0d0d0" stroke-width="1.2"/></svg>
<div class="lbl b" style="left:1246.5px;top:156px;font-size:13.2px">Заливка</div>
<div class="combo" style="left:1246px;top:173px;width:234px;height:26px"></div>
<div class="lbl" style="left:1251px;top:178.5px;font-size:13.2px">Без заливки</div>
<svg style="left:1466.5px;top:185.1px" width="7" height="3.8" viewBox="0 0 7 3.8"><path d="M0.5 0.3 L3.5 3.3 L6.5 0.3" fill="none" stroke="#666" stroke-width="1.25"/></svg>
<div class="hl" style="left:1246px;top:210px;width:234px"></div>
<div class="lbl b" style="left:1246.5px;top:221px;font-size:13.2px">Стиль границ</div>
<div class="combo" style="left:1246px;top:248px;width:112px;height:26px"></div>
<div class="a" style="left:1259px;top:260px;width:73px;height:1.2px;background:#000"></div>
<svg style="left:1345.0px;top:259.1px" width="7" height="3.8" viewBox="0 0 7 3.8"><path d="M0.5 0.3 L3.5 3.3 L6.5 0.3" fill="none" stroke="#666" stroke-width="1.25"/></svg>
<div class="lbl" style="left:1386.5px;top:252.5px;font-size:13.2px">Цвет</div>
<div class="combo" style="left:1426px;top:248px;width:54px;height:26px"></div>
<div class="a" style="left:1428px;top:250px;width:37.5px;height:22px;background:#000"></div>
<svg style="left:1468.0px;top:259.1px" width="7" height="3.8" viewBox="0 0 7 3.8"><path d="M0.5 0.3 L3.5 3.3 L6.5 0.3" fill="none" stroke="#666" stroke-width="1.25"/></svg>
<div class="lbl" style="left:1246.5px;top:285px;font-size:13.2px">Выберите границы, к которым надо</div>
<div class="lbl" style="left:1246.5px;top:302.6px;font-size:13.2px">применить выбранный стиль</div>
<svg style="left:1251px;top:334px" width="16" height="16" viewBox="0 0 16 16" ><path d="M0.6 0.6 H15.4 V15.4 H0.6 Z M8 0.6 V15.4 M0.6 8 H15.4" stroke="#333" stroke-width="1.2" fill="none"/></svg>
<svg style="left:1280px;top:334px" width="16" height="16" viewBox="0 0 16 16" ><path d="M0.5 0.5 H15.5 V15.5 H0.5 Z M8 0.5 V15.5 M0.5 8 H15.5" stroke="#7c7c7c" stroke-width="1" stroke-dasharray="1 1.3" fill="none" shape-rendering="crispEdges"/></svg>
<svg style="left:1308.5px;top:334px" width="16" height="16" viewBox="0 0 16 16" ><path d="M0.5 0.5 H15.5 V15.5 H0.5 Z" stroke="#7c7c7c" stroke-width="1" stroke-dasharray="1 1.3" fill="none" shape-rendering="crispEdges"/><path d="M8 0.5 V15.5 M0.5 8 H15.5" stroke="#333" stroke-width="1.2" fill="none"/></svg>
<svg style="left:1337.5px;top:334px" width="16" height="16" viewBox="0 0 16 16" ><path d="M8 0.5 V15.5 M0.5 8 H15.5" stroke="#7c7c7c" stroke-width="1" stroke-dasharray="1 1.3" fill="none" shape-rendering="crispEdges"/><path d="M0.6 0.6 H15.4 V15.4 H0.6 Z" stroke="#333" stroke-width="1.2" fill="none"/></svg>
<svg style="left:1366.5px;top:334px" width="16" height="16" viewBox="0 0 16 16" ><path d="M0.5 0.5 H15.5 V15.5 H0.5 Z" stroke="#7c7c7c" stroke-width="1" stroke-dasharray="1 1.3" fill="none" shape-rendering="crispEdges"/><path d="M0.8 15.2 L15.2 0.8" stroke="#333" stroke-width="1.2" fill="none"/></svg>
<svg style="left:1395.5px;top:334px" width="16" height="16" viewBox="0 0 16 16" ><path d="M0.5 0.5 H15.5 V15.5 H0.5 Z" stroke="#7c7c7c" stroke-width="1" stroke-dasharray="1 1.3" fill="none" shape-rendering="crispEdges"/><path d="M0.8 0.8 L15.2 15.2" stroke="#333" stroke-width="1.2" fill="none"/></svg>
<svg style="left:1251px;top:369px" width="16" height="16" viewBox="0 0 16 16" ><path d="M0.5 0.5 H15.5 V15.5 H0.5 Z M8 0.5 V15.5 M0.5 8 H15.5" stroke="#7c7c7c" stroke-width="1" stroke-dasharray="1 1.3" fill="none" shape-rendering="crispEdges"/><path d="M0.6 0 V16" stroke="#333" stroke-width="1.2" fill="none"/></svg>
<svg style="left:1280px;top:369px" width="16" height="16" viewBox="0 0 16 16" ><path d="M0.5 0.5 H15.5 V15.5 H0.5 Z M8 0.5 V15.5 M0.5 8 H15.5" stroke="#7c7c7c" stroke-width="1" stroke-dasharray="1 1.3" fill="none" shape-rendering="crispEdges"/><path d="M8 0 V16" stroke="#333" stroke-width="1.2" fill="none"/></svg>
<svg style="left:1308.5px;top:369px" width="16" height="16" viewBox="0 0 16 16" ><path d="M0.5 0.5 H15.5 V15.5 H0.5 Z M8 0.5 V15.5 M0.5 8 H15.5" stroke="#7c7c7c" stroke-width="1" stroke-dasharray="1 1.3" fill="none" shape-rendering="crispEdges"/><path d="M15.4 0 V16" stroke="#333" stroke-width="1.2" fill="none"/></svg>
<svg style="left:1337.5px;top:369px" width="16" height="16" viewBox="0 0 16 16" ><path d="M0.5 0.5 H15.5 V15.5 H0.5 Z M8 0.5 V15.5 M0.5 8 H15.5" stroke="#7c7c7c" stroke-width="1" stroke-dasharray="1 1.3" fill="none" shape-rendering="crispEdges"/><path d="M0 0.6 H16" stroke="#333" stroke-width="1.2" fill="none"/></svg>
<svg style="left:1366.5px;top:369px" width="16" height="16" viewBox="0 0 16 16" ><path d="M0.5 0.5 H15.5 V15.5 H0.5 Z M8 0.5 V15.5 M0.5 8 H15.5" stroke="#7c7c7c" stroke-width="1" stroke-dasharray="1 1.3" fill="none" shape-rendering="crispEdges"/><path d="M0 8 H16" stroke="#333" stroke-width="1.2" fill="none"/></svg>
<svg style="left:1395.5px;top:369px" width="16" height="16" viewBox="0 0 16 16" ><path d="M0.5 0.5 H15.5 V15.5 H0.5 Z M8 0.5 V15.5 M0.5 8 H15.5" stroke="#7c7c7c" stroke-width="1" stroke-dasharray="1 1.3" fill="none" shape-rendering="crispEdges"/><path d="M0 15.4 H16" stroke="#333" stroke-width="1.2" fill="none"/></svg>
<div class="hl" style="left:1246px;top:400px;width:234px"></div>
<div class="lbl b" style="left:1246.5px;top:411px;font-size:13.2px">Отступ</div>
<div class="combo" style="left:1246px;top:429px;width:72px;height:26px"></div>
<div class="lbl" style="left:1246px;top:434.4px;width:48.5px;text-align:right">0</div>
<svg style="left:1304.45px;top:435.2px" width="6.5" height="3.6" viewBox="0 0 6.5 3.6"><path d="M0.5 3.3 L3.25 0.5 L6.0 3.3" fill="none" stroke="#666" stroke-width="1.2"/></svg>
<svg style="left:1304.45px;top:445.7px" width="6.5" height="3.6" viewBox="0 0 6.5 3.6"><path d="M0.5 0.3 L3.25 3.1 L6.0 0.3" fill="none" stroke="#666" stroke-width="1.2"/></svg>
<div class="lbl b" style="left:1246.5px;top:475px;font-size:13.2px">Ориентация текста</div>
<div class="lbl" style="left:1246.5px;top:507.5px;font-size:13.2px">Угол</div>
<div class="combo" style="left:1284px;top:502px;width:72px;height:26px"></div>
<div class="lbl" style="left:1284px;top:507.4px;width:47.5px;text-align:right">0 °</div>
<svg style="left:1342.45px;top:508.2px" width="6.5" height="3.6" viewBox="0 0 6.5 3.6"><path d="M0.5 3.3 L3.25 0.5 L6.0 3.3" fill="none" stroke="#666" stroke-width="1.2"/></svg>
<svg style="left:1342.45px;top:518.7px" width="6.5" height="3.6" viewBox="0 0 6.5 3.6"><path d="M0.5 0.3 L3.25 3.1 L6.0 0.3" fill="none" stroke="#666" stroke-width="1.2"/></svg>
<div class="lbl b" style="left:1246.5px;top:548px;font-size:13.2px">Отображение</div>
<div class="a" style="left:1246px;top:575px;width:17px;height:17px;border:1px solid #cbcbcb;border-radius:2px;background:#f1f1f1"></div>
<div class="lbl" style="left:1273px;top:575.6px;font-size:13.2px">Перенос текста</div>
<div class="a" style="left:1246px;top:603px;width:17px;height:17px;border:1px solid #cbcbcb;border-radius:2px;background:#f1f1f1"></div>
<div class="lbl" style="left:1273px;top:603.5px;font-size:13.2px">Автоподбор ширины</div>
<div class="hl" style="left:1246px;top:631px;width:234px"></div>
<svg style="left:1250px;top:645px" width="17.2" height="17.2" viewBox="0 0 18 18" ><rect x="0.65" y="0.65" width="13.7" height="13.7" fill="none" stroke="#444444" stroke-width="1.3"/><path d="M0.6 2.6 H14.4" stroke="#444444" stroke-width="2.6"/><path d="M0.5 6.2 H14.5 M0.5 9.2 H14.5" stroke="#444444" stroke-width="1.2"/><rect x="7.4" y="7.6" width="10" height="9.8" fill="#f1f1f1" stroke="#444444" stroke-width="1.3"/><path d="M10.6 10 L14.6 12.5 L10.6 15 Z" fill="none" stroke="#444444" stroke-width="1.1"/></svg>
<div class="lbl" style="left:1275.5px;top:646px;font-size:13.2px">Условное форматирование</div>
<svg style="left:1451.25px;top:652.7px" width="6.5" height="3.6" viewBox="0 0 6.5 3.6"><path d="M0.5 0.3 L3.25 3.1 L6.0 0.3" fill="none" stroke="#666" stroke-width="1.2"/></svg>
<div class="vl" style="left:1492px;top:147px;height:602px"></div>
<div class="a" style="left:1493px;top:165px;width:47px;height:36px;background:#7d858c"></div>
<svg style="left:1509px;top:175.5px" width="18" height="14" viewBox="0 0 18 14" ><rect x="0.6" y="0.6" width="16.8" height="12.8" fill="none" stroke="#fff" stroke-width="1.2"/><rect x="3.4" y="3.4" width="11.2" height="7.2" fill="#fff" fill-opacity=".35" stroke="#fff" stroke-opacity=".8" stroke-width="0.9"/><path d="M3.4 0.8 V13.2 M14.6 0.8 V13.2" stroke="#fff" stroke-opacity=".55" stroke-width="0.9"/></svg>
<svg style="left:1507px;top:222px" width="20" height="14" viewBox="0 0 20 14" ><rect x="0.65" y="0.65" width="18.7" height="12.7" fill="none" stroke="#a3a3a3" stroke-width="1.2"/><path d="M0.5 1.6 H19.5 M0.5 5.2 H19.5 M0.5 8.8 H19.5 M0.5 12.2 H19.5 M6.8 1 V13.4 M13.2 1 V13.4" stroke="#a3a3a3" stroke-width="1.5"/></svg>
<svg style="left:1508px;top:266px" width="18" height="17" viewBox="0 0 18 17" ><path d="M4.5 9.4 H0.6 V0.6 H10.4 V3.5" fill="none" stroke="#a3a3a3" stroke-width="1.2"/><circle cx="11" cy="10.4" r="5.9" fill="none" stroke="#a3a3a3" stroke-width="1.2"/></svg>
<svg style="left:1508px;top:312px" width="18" height="17" viewBox="0 0 18 17" ><rect x="0.6" y="0.6" width="16.8" height="15.8" fill="none" stroke="#a3a3a3" stroke-width="1.2"/><circle cx="5" cy="5" r="1.5" fill="none" stroke="#a3a3a3" stroke-width="1"/><path d="M0.8 13.6 L5.6 9.4 L9 12 L13 8.4 L17.2 12.4" fill="none" stroke="#a3a3a3" stroke-width="1.1"/></svg>
<svg style="left:1509px;top:357px" width="17" height="18" viewBox="0 0 17 18" ><rect x="0.6" y="11.6" width="3.4" height="5.8" fill="none" stroke="#a3a3a3" stroke-width="1.1"/><rect x="6.6" y="6.6" width="3.4" height="10.8" fill="none" stroke="#a3a3a3" stroke-width="1.1"/><rect x="12.6" y="0.6" width="3.4" height="16.8" fill="none" stroke="#a3a3a3" stroke-width="1.1"/></svg>
<div class="a b" style="left:1510.5px;top:400px;font-size:18.5px;line-height:22px;color:#a3a3a3">¶</div>
<div class="a" style="left:1511px;top:445px;font-size:14.6px;line-height:20px;color:#a3a3a3;letter-spacing:-1.2px">Ta</div>
<svg style="left:1511.5px;top:461px" width="12" height="5" viewBox="0 0 12 5" ><path d="M0.6 4.4 Q6 -1.6 11.4 4.4" fill="none" stroke="#a3a3a3" stroke-width="1.1"/></svg>
<svg style="left:1508.6px;top:494.2px" width="17.5" height="17" viewBox="0 0 17.5 17" ><g fill="none" stroke="#a3a3a3" stroke-width="1.1"><rect x="0.6" y="0.6" width="4" height="4"/><rect x="7.6" y="0.6" width="10" height="4"/><rect x="0.6" y="7.6" width="4" height="10"/><path d="M15.4 8.4 V12.2 Q15.4 14.4 13.2 14.4 H9 M11 12 L8.6 14.4 L11 16.8 M13.4 10.4 L15.4 8 L17.6 10.4"/></g></svg>
<svg style="left:1508.6px;top:539px" width="19" height="20" viewBox="0 0 19 20" ><rect x="0.6" y="0.6" width="14.8" height="12.8" fill="none" stroke="#a3a3a3" stroke-width="1.2"/><path d="M0.6 2 H15.4" stroke="#a3a3a3" stroke-width="2"/><path d="M3 6.6 H13 M3 9.8 H9" stroke="#a3a3a3" stroke-width="1.2"/><path d="M9 10.4 H19 L15.4 14.6 V19.6 L12.6 18 V14.6 Z" fill="#a3a3a3" stroke="#f1f1f1" stroke-width="0.8"/></svg>
</body></html>
